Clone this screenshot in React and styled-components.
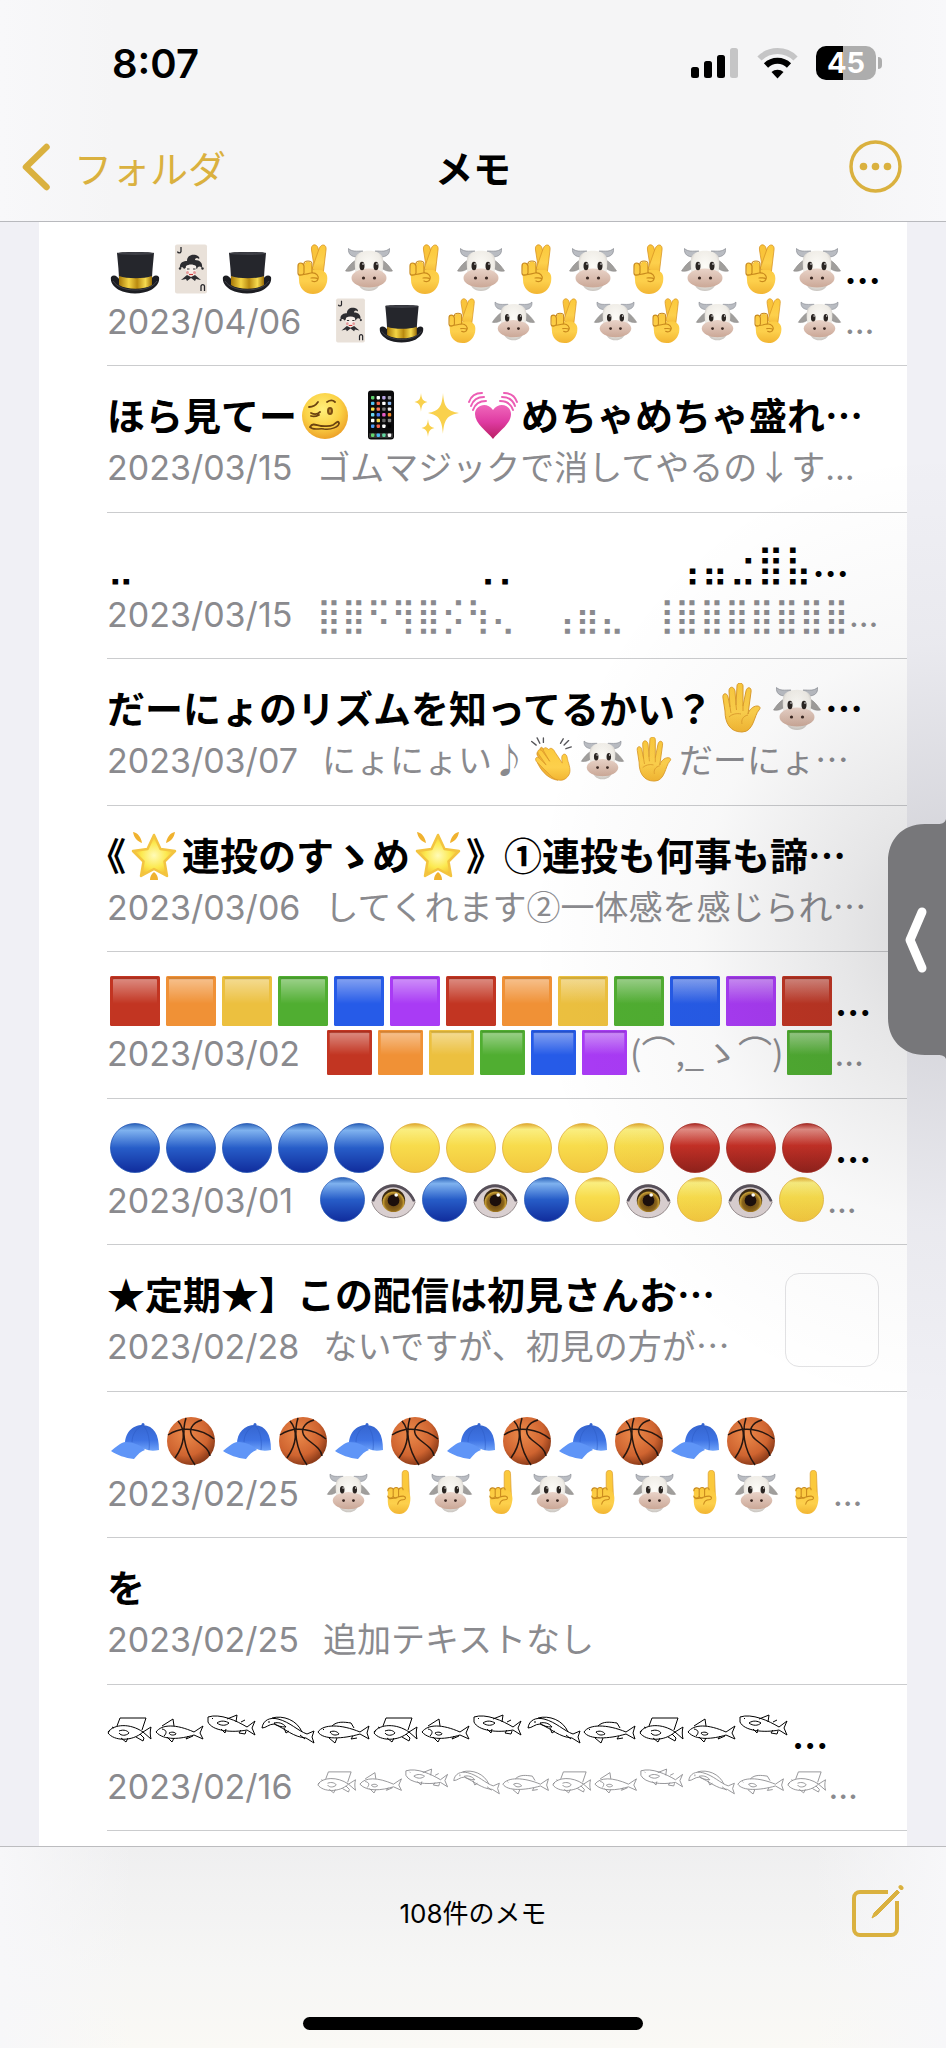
import React from 'react';
import styled, { createGlobalStyle } from 'styled-components';

const gold = '#dab13f';
const latin = 'Inter, "Noto Sans CJK JP", sans-serif';
const kana = '"Noto Sans CJK JP", sans-serif';

const GlobalStyle = createGlobalStyle`
  * {
    box-sizing: border-box;
  }
  body {
    margin: 0;
    background: #f0f0f5;
    font-family: ${latin};
    color: #000;
  }
`;

const Screen = styled.div`
  position: relative;
  display: flex;
  flex-direction: column;
  min-height: 100vh;
  overflow: hidden;
`;

const Header = styled.header`
  position: relative;
  z-index: 1;
  background: linear-gradient(90deg, #f8f8fa, #f5f5f6 12%, #f5f5f6 88%, #f8f8fa);
  border-bottom: 1px solid #b8b9bd;
`;

const StatusBar = styled.div`
  display: flex;
  align-items: center;
  justify-content: space-between;
  height: 112px;
  padding: 14px 64px 0 112px;
`;

const Clock = styled.span`
  font-size: 40px;
  font-weight: 600;
`;

const StatusIcons = styled.div`
  display: flex;
  align-items: center;
  gap: 18px;
`;

const Battery = styled.div`
  display: flex;
  align-items: center;
  gap: 2px;
`;

const BatteryBody = styled.span`
  width: 60px;
  height: 34px;
  border-radius: 10px;
  background: linear-gradient(90deg, #000 45%, #adadad 45%);
  color: #fff;
  font-size: 29px;
  font-weight: 700;
  line-height: 34px;
  text-align: center;
`;

const BatteryTip = styled.span`
  width: 4px;
  height: 12px;
  border-radius: 0 6px 6px 0;
  background: #adadad;
`;

const NavBar = styled.nav`
  display: grid;
  grid-template-columns: 1fr auto 1fr;
  align-items: center;
  height: 109px;
  padding: 0 22px;
`;

const BackLink = styled.a`
  display: flex;
  align-items: center;
  gap: 24px;
  color: ${gold};
  font-family: ${kana};
  font-size: 38px;
  text-decoration: none;
`;

const Heading = styled.h1`
  margin: 0;
  font-family: ${kana};
  font-size: 38px;
  font-weight: 700;
`;

const IconButton = styled.button`
  display: flex;
  justify-self: end;
  margin-right: 22px;
  padding: 0;
  border: 0;
  background: none;
  color: ${gold};
  cursor: pointer;
`;

const Main = styled.main`
  display: flex;
  flex: 1;
  margin-top: -2px;
  padding: 0 39px;
`;

const NoteList = styled.ul`
  display: grid;
  flex: 1;
  grid-auto-rows: 1fr;
  min-width: 0;
  margin: 0;
  padding: 0 0 15px 68px;
  list-style: none;
  background: #fff;
`;

const Row = styled.li`
  display: flex;
  gap: 24px;
  min-height: 146px;
  min-width: 0;
  padding: 23px 28px 18px 0;
  border-bottom: 1px solid #cbccce;
`;

const RowText = styled.div`
  flex: 1;
  min-width: 0;
`;

const Title = styled.h2`
  margin: 0;
  font-size: 38px;
  font-weight: 600;
  line-height: 54px;
  white-space: pre;
`;

const Preview = styled.p`
  margin: 0;
  color: #8a8a8e;
  font-size: 34px;
  line-height: 50px;
  white-space: pre;
`;

const NoteDate = styled.time`
  margin-right: 24px;
`;

const Kana = styled.span`
  font-family: ${kana};
  line-height: 1;
  text-spacing-trim: trim-start;
`;

const Braille = styled.span`
  font-family: "DejaVu Sans", sans-serif;
  font-weight: 400;
  line-height: 1;
`;

const Glyph = styled.svg`
  width: ${p => (p.$small ? 45 : 50)}px;
  height: ${p => (p.$small ? 45 : 50)}px;
  margin: 0 3px;
  vertical-align: ${p => (p.$small ? -9 : -10)}px;
`;

const Fish = styled.svg`
  width: ${p => p.$w}px;
  height: ${p => (p.$small ? 27 : 30)}px;
  vertical-align: ${p => (p.$small ? 4 : 5)}px;
  fill: none;
  stroke: currentColor;
  stroke-width: 1;
`;

const Thumb = styled.div`
  flex: none;
  align-self: center;
  width: 94px;
  height: 94px;
  border: 1px solid #e2e2e4;
  border-radius: 14px;
`;

const Footer = styled.footer`
  position: relative;
  z-index: 1;
  display: flex;
  flex-direction: column;
  align-items: center;
  justify-content: space-between;
  height: 202px;
  padding-bottom: 18px;
  border-top: 1px solid #bcbcbf;
  background:
    linear-gradient(90deg, #f7f7f9, rgba(247, 247, 249, 0) 14%, rgba(247, 247, 249, 0) 86%, #f7f7f9),
    linear-gradient(#efeff0, #f6f6f5 60%, #faf9f5);
`;

const Toolbar = styled.div`
  display: grid;
  grid-template-columns: 1fr auto 1fr;
  align-items: center;
  width: 100%;
  height: 128px;
  padding: 0 20px;
`;

const Count = styled.span`
  grid-column: 2;
  font-size: 26px;
`;

const HomeBar = styled.div`
  width: 36%;
  height: 13px;
  border-radius: 7px;
  background: #000;
`;

// soft shadow that spreads from the drawer handle over the list
const Shade = styled.div`
  position: absolute;
  top: 22%;
  right: 0;
  width: 44%;
  height: 47%;
  background: radial-gradient(100% 50% at 100% 50%, rgba(30, 30, 40, 0.18), rgba(30, 30, 40, 0.11) 25%, rgba(30, 30, 40, 0.03) 60%, rgba(30, 30, 40, 0) 100%);
  pointer-events: none;
`;

const Handle = styled.button`
  position: absolute;
  top: 40%;
  right: 0;
  display: flex;
  align-items: center;
  width: 58px;
  height: 240px;
  padding: 0;
  border: 0;
  background: none;
  cursor: pointer;
`;

// emoji artwork, all in a 50 x 50 box
const shine = (
  <defs>
    <linearGradient id="gold" x1="0" x2="1" y1="0" y2="0">
      <stop offset="0" stopColor="#a67708" />
      <stop offset="0.3" stopColor="#f5d544" />
      <stop offset="0.55" stopColor="#b98a10" />
      <stop offset="0.8" stopColor="#f7dc50" />
      <stop offset="1" stopColor="#9a6c06" />
    </linearGradient>
    <linearGradient id="skin" x1="0" x2="0" y1="0" y2="1">
      <stop offset="0" stopColor="#fbc93c" />
      <stop offset="0.6" stopColor="#fdd04c" />
      <stop offset="1" stopColor="#f2b532" />
    </linearGradient>
    <radialGradient id="face" cx="0.45" cy="0.35" r="0.65">
      <stop offset="0" stopColor="#fff07c" />
      <stop offset="0.6" stopColor="#fbd245" />
      <stop offset="1" stopColor="#eda229" />
    </radialGradient>
    <linearGradient id="gloss" x1="0" x2="0" y1="0" y2="1">
      <stop offset="0" stopColor="#fff" stopOpacity="0.42" />
      <stop offset="0.55" stopColor="#fff" stopOpacity="0" />
    </linearGradient>
    <linearGradient id="blueball" x1="0" x2="0" y1="0" y2="1">
      <stop offset="0" stopColor="#2a62b8" />
      <stop offset="0.14" stopColor="#7fb2ef" />
      <stop offset="0.5" stopColor="#275dc8" />
      <stop offset="1" stopColor="#102c9c" />
    </linearGradient>
    <linearGradient id="yellowball" x1="0" x2="0" y1="0" y2="1">
      <stop offset="0" stopColor="#dfa62e" />
      <stop offset="0.12" stopColor="#faee80" />
      <stop offset="0.45" stopColor="#f8dc4c" />
      <stop offset="1" stopColor="#f2c63e" />
    </linearGradient>
    <linearGradient id="redball" x1="0" x2="0" y1="0" y2="1">
      <stop offset="0" stopColor="#b02a24" />
      <stop offset="0.12" stopColor="#e38d84" />
      <stop offset="0.45" stopColor="#c53026" />
      <stop offset="1" stopColor="#8f211b" />
    </linearGradient>
    <radialGradient id="basket" cx="0.4" cy="0.35" r="0.65">
      <stop offset="0" stopColor="#ec8a4b" />
      <stop offset="0.7" stopColor="#cf6430" />
      <stop offset="1" stopColor="#8f3d1a" />
    </radialGradient>
    <linearGradient id="cap" x1="0" x2="0" y1="0" y2="1">
      <stop offset="0" stopColor="#3565d0" />
      <stop offset="0.6" stopColor="#3f74e4" />
      <stop offset="1" stopColor="#6ea2fa" />
    </linearGradient>
    <linearGradient id="pink" x1="0" x2="0" y1="0" y2="1">
      <stop offset="0" stopColor="#f067bb" />
      <stop offset="0.5" stopColor="#df3ba2" />
      <stop offset="1" stopColor="#b91f63" />
    </linearGradient>
    <radialGradient id="star" cx="0.5" cy="0.5" r="0.55">
      <stop offset="0" stopColor="#fffbb8" />
      <stop offset="0.55" stopColor="#fce94f" />
      <stop offset="1" stopColor="#f2b62f" />
    </radialGradient>
    <radialGradient id="white" cx="0.5" cy="0.4" r="0.6">
      <stop offset="0" stopColor="#fdfcf8" />
      <stop offset="0.75" stopColor="#efece6" />
      <stop offset="1" stopColor="#c9c5c0" />
    </radialGradient>
    <linearGradient id="muzzle" x1="0" x2="0" y1="0" y2="1">
      <stop offset="0" stopColor="#e9d3c8" />
      <stop offset="1" stopColor="#cba897" />
    </linearGradient>
    <radialGradient id="iris" cx="0.5" cy="0.6" r="0.5">
      <stop offset="0" stopColor="#5a3a10" />
      <stop offset="0.7" stopColor="#8b651b" />
      <stop offset="0.9" stopColor="#c9a035" />
      <stop offset="1" stopColor="#3b2a12" />
    </radialGradient>
  </defs>
);

const Square = ({ color }) => (
  <>
    <rect width="50" height="50" rx="1.5" fill={color} />
    <rect x="3" y="3" width="44" height="45" rx="1" fill="url(#gloss)" />
    <path d="M1 1h48l-2.500 2.500h-43z" fill="#000" opacity="0.1" />
  </>
);

const Ball = ({ fill, edge }) => <circle cx="25" cy="25" r="24.500" fill={`url(#${fill})`} stroke={edge} strokeWidth="0.8" />;

const art = {
  '🎩': (
    <>
      <path d="M1 33c3-3 6-1 9 3h30c3-4 6-6 9-3 1 6-3 10-8 13-9 4.500-23 4.500-32 0-5-3-9-7-8-13z" fill="#1c1d22" />
      <path d="M7 9c0-1.500 36-1.500 37 0-1 12-2 20-2 29-8 4-24 4-33 0 0-10-1-18-2-29z" fill="#25262c" />
      <ellipse cx="25.500" cy="9.500" rx="18" ry="1.500" fill="#3d3e45" />
      <path d="M9 32c8 3 25 3 33 0v9c-8 5-25 5-33 0z" fill="url(#gold)" />
      <path d="M3 37c4 6 12 9 22 9s18-3 22-9" fill="none" stroke="#4a4b52" strokeWidth="0.8" />
    </>
  ),
  '🃏': (
    <>
      <rect x="9" y="0.500" width="32" height="49" rx="2" fill="#e9e1d9" />
      <path d="M15 3v4.500a1.800 1.800 0 0 1-3.500 0M35 47v-5a1.800 1.800 0 0 1 3.500 0v5" fill="none" stroke="#26262a" strokeWidth="1.300" />
      <path d="M14 24c-1-6 4-7 7-7 0-5 4-7 9-6 3 1 4 3 3 4-2-2-4-1-4 1 5 0 8 3 7 8-2-2-4-2-5 1-5-3-9-3-13 0-1-2-2-2-4-1z" fill="#2d2d31" />
      <circle cx="14" cy="24.500" r="1.200" fill="#2d2d31" />
      <circle cx="36.500" cy="24.500" r="1.200" fill="#2d2d31" />
      <path d="M20 22c3-2 7-2 10 0 1 5-1 9-5 11-4-2-6-6-5-11z" fill="#f6efea" />
      <path d="M21 25h2.500M27 25h2.500" stroke="#333" strokeWidth="1.200" />
      <circle cx="21.500" cy="28.500" r="1.500" fill="#e59a9a" />
      <circle cx="28.500" cy="28.500" r="1.500" fill="#e59a9a" />
      <path d="M23 30.500h4" stroke="#c33" strokeWidth="1.200" />
      <path d="M25 33l4-2 6 5-5-1-1 2-4-3-4 3-1-2-5 1 6-5z" fill="#2d2d31" />
    </>
  ),
  '🤞': (
    <>
      <path d="M27 28L23.500 6c-1-6 5-7 6.500-2l5 25z" fill="#f9c43a" stroke="#d99524" strokeWidth="0.8" />
      <path d="M24 25l7-20c2-6 8-5 7 1l-3 25z" fill="url(#skin)" stroke="#d99524" strokeWidth="0.8" />
      <path d="M10 22c0-4 5-4 6 0 0-6 8-6 8 0v4h9c6 2 7 6 6 12-2 8-7 12-14 12-8 0-14-6-14-14z" fill="url(#skin)" />
      <path d="M10 22c0-4 5-4 6 0v7c-1 3-6 3-6 0zM16 20c0-4 8-4 8 0v8M11 31c4 0 8-1 12-2 6-1 8 4 7 6-2-2-5-1-7-1M30 35c-1 3-4 3-6 2" fill="none" stroke="#c98a1d" strokeWidth="1.200" strokeLinecap="round" />
    </>
  ),
  '🐮': (
    <>
      <path d="M14 13C7 13 4 10 4.500 4.500 8 8 13 7 19 7zM36 13c7 0 10-3 9.500-8.500C42 8 37 7 31 7z" fill="#b9bcc2" stroke="#888b92" strokeWidth="0.7" />
      <path d="M12 16c-4 2-8 7-10.500 11 5 1 9-1 12-4zM38 16c4 2 8 7 10.500 11-5 1-9-1-12-4z" fill="#a09e9c" stroke="#8c8a88" strokeWidth="0.6" />
      <path d="M11 15c1-11 27-11 28 0 1 8-1 14-2 20-1 8-5 12-12 12s-11-4-12-12c-1-6-3-12-2-20z" fill="url(#white)" />
      <ellipse cx="25" cy="34" rx="17.500" ry="9.500" fill="url(#muzzle)" />
      <ellipse cx="18" cy="22" rx="2.500" ry="4.200" fill="#2a2522" />
      <ellipse cx="32" cy="22" rx="2.500" ry="4.200" fill="#2a2522" />
      <circle cx="19" cy="20" r="0.800" fill="#fff" />
      <circle cx="33" cy="20" r="0.800" fill="#fff" />
      <circle cx="19.500" cy="34" r="1.600" fill="#3b2822" />
      <circle cx="30.500" cy="34" r="1.600" fill="#3b2822" />
    </>
  ),
  '🥴': (
    <>
      <circle cx="25" cy="26" r="23" fill="url(#face)" />
      <path d="M9 17c4 0 7-2 9-5M27 12c3-2 6-2 8 0M11 23c4 2 7 1 9-1M11 26c3 1 6 0 8-1M10 37c3-5 7-1 11-1 5 0 8 1 12-1 3-2 5-5 6-2" fill="none" stroke="#6b4310" strokeWidth="1.800" strokeLinecap="round" />
      <path d="M10 37c3 4 9 1 14 2 7 1 15-2 15-6" fill="none" stroke="#6b4310" strokeWidth="1.600" />
      <ellipse cx="30" cy="21" rx="3" ry="4" fill="#7a4d12" />
      <ellipse cx="30" cy="21" rx="1" ry="2" fill="#c89330" />
    </>
  ),
  '📱': (
    <>
      <rect x="12" y="0.500" width="26" height="49" rx="3" fill="#0a0a0b" />
      <rect x="13" y="43" width="24" height="5" rx="1" fill="#333" />
      {['#5fd06d', '#fff', '#b9a5e6', '#9a9aa2', '#4fc4f4', '#f0684b', '#fff', '#8ab8f0', '#f7e14c', '#f4775c', '#777', '#eee', '#6ad6f5', '#4a7cf4', '#e65bc6', '#f08a2c', '#fff', '#f2d74c', '#666', '#888', '#4e9bf5', '#f4634d', '#fff', '#000', '#62d76b', '#49b8f2', '#62d7a0', '#f4f4f4'].map((c, i) => (
        <rect key={i} x={15 + (i % 4) * 5.6} y={i > 23 ? 43.5 : 6 + Math.floor(i / 4) * 5.7} width="3.400" height="3.400" rx="0.800" fill={c} />
      ))}
    </>
  ),
  '✨': (
    <g fill="#f9d14d">
      <path d="M31 3c1 14 4 18 16 20-12 2-15 7-16 21-1-14-4-19-15-21 11-2 14-6 15-20z" />
      <path d="M9 3c.5 6 2 8 6.500 9-4.500 1-6 3-6.500 10-.5-7-2-9-6.500-10C7 11 8.500 9 9 3zM16 29c.5 6 2 8 6.500 9-4.500 1-6 3-6.500 9-.5-6-2-8-6.500-9 4.500-1 6-3 6.500-9z" />
    </g>
  ),
  '💓': (
    <>
      <path d="M25 49C19 41 7 34 7 24c0-9 12-13 18-4 6-9 18-5 18 4 0 10-12 17-18 25z" fill="url(#pink)" />
      <path d="M1 12C3 6 8 3 14 3M3 16C5 10 10 7 16 7M5 20c2-6 7-9 13-9M49 12C47 6 42 3 36 3M47 16C45 10 40 7 34 7M45 20c-2-6-7-9-13-9" fill="none" stroke="#ec5db4" strokeWidth="2" strokeLinecap="round" />
    </>
  ),
  '✋': (
    <>
      <path d="M7 15c-1-5 4-6 5-1l2 10-1-16c0-5 5-5 6 0l1 14 1-19c0-4 6-4 6 0v20l3-15c1-5 6-4 5 1l-3 22c1-4 5-8 9-8 3 0 4 2 2 4-5 5-5 22-17 22C14 49 9 40 9 28z" fill="url(#skin)" stroke="#dd9d2b" strokeWidth="1" />
      <path d="M14 24l1 6M20 22l.5 5M27 23v5M32 32c-5 1-7 5-6 9M13 34c3-3 8-4 12-3" fill="none" stroke="#dc9b2b" strokeWidth="0.900" />
    </>
  ),
  '👏': (
    <>
      <path d="M17 15c3-3 5 0 8 4l13 17-6 12c-9-1-17-8-22-18-2-3 0-5 3-3l-4-7c-1-4 2-5 4-2l-1-4c1-4 3-3 5 1z" fill="#f2b334" stroke="#d28f21" strokeWidth="0.800" />
      <path d="M22 14c2-3 5-1 7 3l8 12c-1-6-1-9 2-10 4 0 3 5 5 10 2 7 3 12-3 17-5 4-13 2-18-4L8 27c-2-4 1-6 4-3l7 7-9-13c-1-4 2-5 5-2l8 11-7-12c0-4 3-4 6-1z" fill="url(#skin)" stroke="#d9972a" strokeWidth="0.800" />
      <path d="M3 5l5 4M9 1l3 6M16 1v5M35 7l3-5M39 9l5-5M41 13l6-2" stroke="#555559" strokeWidth="1.500" strokeLinecap="round" />
    </>
  ),
  '🌟': (
    <>
      <path d="M25 5l6.500 14 14.500 2-10.500 10.500L38 46l-13-7-13 7 2.500-14.500L4 21l14.500-2z" fill="url(#star)" stroke="#f3c440" strokeWidth="2.500" strokeLinejoin="round" />
      <path d="M4 2c5 1 8 5 9 11C8 11 5 8 4 2zM46 2c-5 1-8 5-9 11 5-2 8-5 9-11zM25 42c3 2 4 5 4 8h-8c0-3 1-6 4-8z" fill="#f0b22f" />
    </>
  ),
  '🟥': <Square color="#c23522" />,
  '🟧': <Square color="#f09136" />,
  '🟨': <Square color="#ecc03f" />,
  '🟩': <Square color="#50ae31" />,
  '🟦': <Square color="#265be8" />,
  '🟪': <Square color="#a93bf5" />,
  '🔵': <Ball fill="blueball" edge="#2356b4" />,
  '🟡': <Ball fill="yellowball" edge="#dfae38" />,
  '🔴': <Ball fill="redball" edge="#a42a22" />,
  '👁': (
    <>
      <path d="M1 28C9 2 39 2 49 28 41 51 8 51 1 28z" fill="#d9cfd0" stroke="#8b8182" strokeWidth="1" />
      <path d="M2 27C11 4 38 4 48 27" fill="none" stroke="#57505a" strokeWidth="3" />
      <circle cx="25" cy="26" r="13" fill="url(#iris)" />
      <circle cx="25" cy="26" r="6.500" fill="#1c0f0c" />
      <circle cx="28" cy="20" r="2" fill="#fff" />
    </>
  ),
  '🧢': (
    <>
      <path d="M15 31C14 17 22 9 33 9c11 1 16 9 16 25-5 1-10 1-14-1z" fill="url(#cap)" />
      <path d="M15 26c8 0 16 3 20 8-4 1-7 4-11 9-9-1-17-4-23-8 5-4 9-8 14-9z" fill="#5f95f7" />
      <path d="M33 9c-8 4-11 11-11 17M33 9c6 7 7 16 6 25" fill="none" stroke="#2e5cc6" strokeWidth="0.600" />
      <circle cx="33" cy="8.500" r="1.500" fill="#3565d0" />
    </>
  ),
  '🏀': (
    <>
      <circle cx="25" cy="25" r="24" fill="url(#basket)" />
      <path d="M20 2c-4 12-3 30 9 47M2 19c14-10 34-6 46 4M36 4c-11 3-14 11-9 17s16 10 17 19M12 5c8 9 7 23-3 37" fill="none" stroke="#251610" strokeWidth="1.500" />
    </>
  ),
  '☝': (
    <>
      <path d="M28 24V4c0-5 7-5 7 0l1 26z" fill="#fbc93c" stroke="#dc9c2b" strokeWidth="0.800" />
      <path d="M12 23c0-4 6-4 6-1 1-4 6-3 6 0 0-3 5-3 5 0 5 0 9 4 8 12-1 9-5 15-12 15-8 0-13-6-13-14z" fill="url(#skin)" />
      <path d="M12 23c0-4 6-4 6-1v7c-1 3-6 3-6 0M18 22c1-4 6-3 6 0v7c-1 3-6 3-6 0M24 22c1-3 5-3 5 0M14 32c5 0 10-3 15-3 4 1 3 4 0 4-2 0-5 0-6 5" fill="none" stroke="#c98a1d" strokeWidth="1.200" strokeLinecap="round" />
    </>
  ),
};

// each fish: width in a title, width in a preview line, outline
const fishes = {
  '𓆛': [48, 42, 'M1 18c6-8 22-9 35 0M36 18c-11 10-29 9-35 1l2-3M10 12l3-8h26l-4 12M36 18l8-5c-1 4-1 8 0 12zM12 17c5-2 9 0 10 2-3 3-8 3-10 0M14 24l5 4 2-4M29 23l7 4 1-3-4-4M5 13l2 1'],
  '𓆜': [52, 46, 'M1 18c6-8 20-8 38 0l9-6-3 7 3 6-9-4c-13 4-30 6-38-3zM7 12l11-7 1 7M12 23l5 5 2-4M33 22l-2 3 7-3M14 19c4-2 7 0 7 1-3 2-6 1-7-1M7 15c5 1 5 4 2 7'],
  '𓆝': [53, 47, 'M1 3c12-4 29 4 39 10l8-6-3 7 3 7-8-5C25 19 5 17 1 8zM20 5l10-4-1 7M34 8l4-2M14 15l4 4 1-4M34 16l-2 3 6 1 1-3M10 9c4-3 9-2 12 0-3 3-8 3-12 0M5 4l1 1'],
  '𓆞': [57, 50, 'M2 14C3 6 10 3 18 5c12 3 20 12 29 15l7-3-2 6 2 6-8-5C33 23 26 15 14 10 9 10 6 14 2 14M12 4c11-3 25 2 30 14M14 9c4-1 9 0 12 4-5 0-9-1-12-4M24 14l2 5 3-2M40 21l5 4M9 7v2'],
  '𓆟': [56, 50, 'M1 18c5-8 23-8 42 0l9-6-2 7 2 6-9-5c-17 5-37 6-42-2zM15 12c5-5 12-4 19-3l3 5M12 24l6 5 2-5M36 22l-2 3 6-1M13 18c4-2 8 0 9 2-4 2-7 1-9-2M6 15l1 1'],
};

const notes = [
  { date: '2023/04/06', title: '🎩🃏🎩 🤞🐮🤞🐮🤞🐮🤞🐮🤞🐮…', preview: '🃏🎩 🤞🐮🤞🐮🤞🐮🤞🐮…' },
  { date: '2023/03/15', title: 'ほら見てー🥴📱✨💓めちゃめちゃ盛れ…', preview: 'ゴムマジックで消してやるの↓す…', midTitle: true },
  { date: '2023/03/15', title: '⣀⠀⠀⠀⠀⠀⠀⠀⠀⠀⠀⠀⠀⢀⡀⠀⠀⠀⠀⠀ ⢠⣤⣐⣿⣧…', preview: '⣿⣿⠫⢻⣿⡪⢳⢄⠀ ⢠⣶⣄⠀⢸⣿⣿⣿⣿⣿⣿⣿…' },
  { date: '2023/03/07', title: 'だーにょのリズムを知ってるかい？✋🐮…', preview: 'にょにょい♪👏🐮✋だーにょ…', midTitle: true, midPreview: true },
  { date: '2023/03/06', title: '《🌟連投のすゝめ🌟》①連投も何事も諦…', preview: 'してくれます②一体感を感じられ…', midTitle: true, midPreview: true },
  { date: '2023/03/02', title: '🟥🟧🟨🟩🟦🟪🟥🟧🟨🟩🟦🟪🟥…', preview: '🟥🟧🟨🟩🟦🟪(⌒,_ゝ⌒)🟩…' },
  { date: '2023/03/01', title: '🔵🔵🔵🔵🔵🟡🟡🟡🟡🟡🔴🔴🔴…', preview: '🔵👁🔵👁🔵🟡👁🟡👁🟡…' },
  { date: '2023/02/28', title: '★定期★】この配信は初見さんお…', preview: 'ないですが、初見の方が…', midTitle: true, midPreview: true, thumb: true },
  { date: '2023/02/25', title: '🧢🏀🧢🏀🧢🏀🧢🏀🧢🏀🧢🏀', preview: '🐮☝🐮☝🐮☝🐮☝🐮☝…' },
  { date: '2023/02/25', title: 'を', preview: '追加テキストなし' },
  { date: '2023/02/16', title: '𓆛𓆜𓆝𓆞𓆟𓆛𓆜𓆝𓆞𓆟𓆛𓆜𓆝…', preview: '𓆛𓆜𓆝𓆞𓆟𓆛𓆜𓆝𓆞𓆟𓆛…' },
];

const pictures = new RegExp(`(${[...Object.keys(art), ...Object.keys(fishes)].join('|')}|[\\u2800-\\u28ff]+|…| )`, 'u');

function Rich({ text, small, mid }) {
  return text.split(pictures).filter(Boolean).map((part, i) => {
    if (art[part]) {
      return <Glyph key={i} $small={small} viewBox="0 0 50 50" role="img" aria-label={part}>{art[part]}</Glyph>;
    }
    if (fishes[part]) {
      const [w, smallW, d] = fishes[part];
      return (
        <Fish key={i} $small={small} $w={small ? smallW : w} viewBox={`0 0 ${w} 30`} role="img" aria-label={part}>
          <path d={d} />
        </Fish>
      );
    }
    if (/[\u2800-\u28ff]/.test(part)) return <Braille key={i}>{part}</Braille>;
    if (part === ' ' || (part === '…' && !mid)) return part;
    return <Kana key={i}>{part}</Kana>;
  });
}

function Note({ note }) {
  return (
    <Row>
      <RowText>
        <Title><Rich text={note.title} mid={note.midTitle} /></Title>
        <Preview>
          <NoteDate>{note.date}</NoteDate>
          <Rich small text={note.preview} mid={note.midPreview} />
        </Preview>
      </RowText>
      {note.thumb && <Thumb />}
    </Row>
  );
}

function App() {
  return (
    <Screen>
      <GlobalStyle />
      <Header>
        <StatusBar>
          <Clock>8:07</Clock>
          <StatusIcons>
            <svg width="48" height="32" viewBox="0 0 48 32">
              {shine}
              <rect x="0" y="20" width="8" height="11" rx="2.500" />
              <rect x="13" y="14" width="8" height="17" rx="2.500" />
              <rect x="26" y="8" width="8" height="23" rx="2.500" />
              <rect x="39" y="1" width="8" height="30" rx="2.500" fill="#c5c5c6" />
            </svg>
            <svg width="41" height="32" viewBox="0 0 41 32" fill="none" strokeWidth="6">
              <path d="M2.500 11.500a25.500 25.500 0 0 1 36 0" stroke="#c5c5c6" />
              <path d="M9 18.500a16.500 16.500 0 0 1 23 0" stroke="#000" />
              <path d="M14.500 25a9 9 0 0 1 12 0l-6 6.500z" fill="#000" />
            </svg>
            <Battery>
              <BatteryBody>45</BatteryBody>
              <BatteryTip />
            </Battery>
          </StatusIcons>
        </StatusBar>
        <NavBar>
          <BackLink href="#folders">
            <svg width="28" height="48" viewBox="0 0 28 48" fill="none" stroke="currentColor" strokeWidth="6.500" strokeLinecap="round" strokeLinejoin="round">
              <path d="M24.500 4L4 24l20.500 20" />
            </svg>
            フォルダ
          </BackLink>
          <Heading>メモ</Heading>
          <IconButton aria-label="その他">
            <svg width="53" height="53" viewBox="0 0 53 53" fill="currentColor">
              <circle cx="26.500" cy="26.500" r="24.500" fill="none" stroke="currentColor" strokeWidth="3.500" />
              <circle cx="14.500" cy="26.500" r="3.800" />
              <circle cx="26.500" cy="26.500" r="3.800" />
              <circle cx="38.500" cy="26.500" r="3.800" />
            </svg>
          </IconButton>
        </NavBar>
      </Header>
      <Main>
        <NoteList>
          {notes.map((note, i) => <Note key={i} note={note} />)}
        </NoteList>
      </Main>
      <Footer>
        <Toolbar>
          <Count>108件のメモ</Count>
          <IconButton aria-label="新規メモ">
            <svg width="52" height="54" viewBox="0 0 52 54" fill="none" stroke="currentColor">
              <path d="M36 8H8a6 6 0 0 0-6 6v31a6 6 0 0 0 6 6h31a6 6 0 0 0 6-6V17" strokeWidth="4" />
              <path d="M20 34l2-5L45 6l2.500 2.500L25 31z" fill="currentColor" strokeWidth="1" />
              <path d="M48.500 3l1 1" strokeWidth="4" strokeLinecap="round" />
            </svg>
          </IconButton>
        </Toolbar>
        <HomeBar />
      </Footer>
      <Shade />
      <Handle aria-label="開く">
        <svg width="58" height="240" viewBox="0 0 58 240">
          <path d="M58 0c-1 4-4 5-8 5H37C13 5 0 22 0 42v157c0 21 14 37 37 37h13c4 0 7 1 8 4z" fill="#77777a" />
          <path d="M34 93L22 121l12 28" fill="none" stroke="#fff" strokeWidth="9" strokeLinecap="round" strokeLinejoin="round" />
        </svg>
      </Handle>
    </Screen>
  );
}

export default App;
